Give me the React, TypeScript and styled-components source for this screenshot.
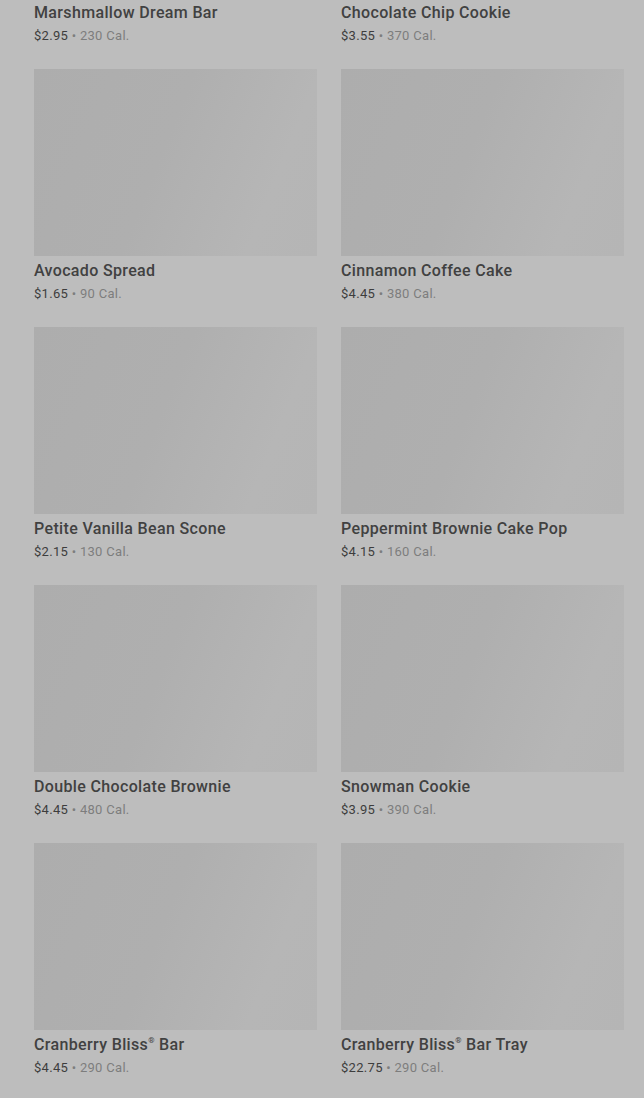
import React from 'react';
import styled, { createGlobalStyle } from 'styled-components';

const GlobalStyle = createGlobalStyle`
  html, body {
    margin: 0;
    padding: 0;
    background: #bdbdbd;
    font-family: Roboto, "Liberation Sans", Arial, sans-serif;
    overflow: hidden;
  }
`;

const Page = styled.div`
  box-sizing: border-box;
  width: 644px;
  height: 1098px;
  overflow: hidden;
  background: #bdbdbd;
  padding: 0 20px 0 34px;
`;

// the list is scrolled: first row sits partly above the viewport
const Grid = styled.div`
  display: grid;
  grid-template-columns: 283px 283px;
  column-gap: 24px;
  margin-top: -189px;
`;

const Card = styled.div`
  display: flex;
  flex-direction: column;
  padding-bottom: 24px;
`;

const Thumb = styled.div`
  height: 187px;
  background: linear-gradient(112deg, #adadad 0%, #afafaf 45%, #b6b6b6 80%, #b5b5b5 100%);
`;

const Title = styled.div`
  margin-top: 5px;
  font-size: 16px;
  line-height: 20px;
  font-weight: 500;
  color: #414141;
  letter-spacing: 0.35px;
  white-space: nowrap;

  sup {
    font-size: 8px;
    line-height: 0;
    position: relative;
    top: -1px;
  }
`;

const Meta = styled.div`
  margin-top: 4px;
  font-size: 13px;
  line-height: 18px;
  color: #3d3d3d;
  letter-spacing: 0.3px;
`;

const Cal = styled.span`
  color: #7d7d7d;
`;

const items = [
  { name: 'Marshmallow Dream Bar', price: '$2.95', cal: '230 Cal.' },
  { name: 'Chocolate Chip Cookie', price: '$3.55', cal: '370 Cal.' },
  { name: 'Avocado Spread', price: '$1.65', cal: '90 Cal.' },
  { name: 'Cinnamon Coffee Cake', price: '$4.45', cal: '380 Cal.' },
  { name: 'Petite Vanilla Bean Scone', price: '$2.15', cal: '130 Cal.' },
  { name: 'Peppermint Brownie Cake Pop', price: '$4.15', cal: '160 Cal.' },
  { name: 'Double Chocolate Brownie', price: '$4.45', cal: '480 Cal.' },
  { name: 'Snowman Cookie', price: '$3.95', cal: '390 Cal.' },
  { name: 'Cranberry Bliss® Bar', price: '$4.45', cal: '290 Cal.' },
  { name: 'Cranberry Bliss® Bar Tray', price: '$22.75', cal: '290 Cal.' },
];

const renderName = (name: string) => {
  const parts = name.split('®');
  if (parts.length === 1) return name;
  return (
    <>
      {parts[0]}
      <sup>®</sup>
      {parts[1]}
    </>
  );
};

const App = () => {
  return (
    <>
      <GlobalStyle />
      <Page>
        <Grid>
          {items.map(item => (
            <Card key={item.name}>
              <Thumb />
              <Title>{renderName(item.name)}</Title>
              <Meta>
                {item.price} <Cal>• {item.cal}</Cal>
              </Meta>
            </Card>
          ))}
        </Grid>
      </Page>
    </>
  );
};

export default App;
